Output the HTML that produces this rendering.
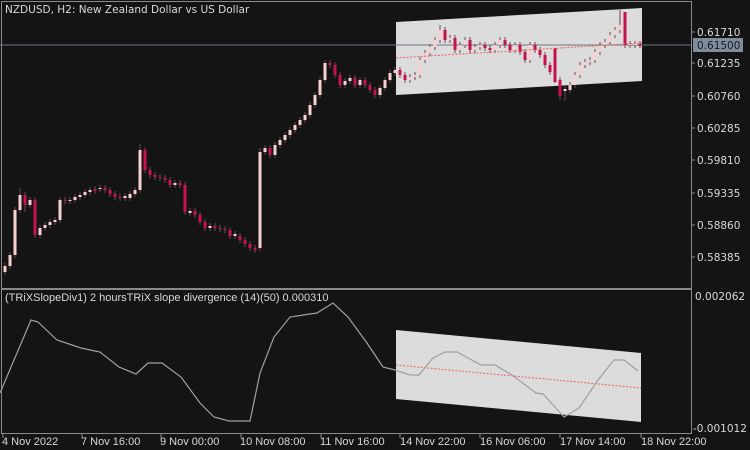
<!DOCTYPE html>
<html><head><meta charset="utf-8"><style>
html,body{margin:0;padding:0;background:#141414;}
svg{display:block;}
text{font-family:"DejaVu Sans","Liberation Sans",sans-serif;font-size:10.5px;fill:#d8d8d8;}
.s{font-family:"Liberation Sans",sans-serif;font-size:11px;}
</style></head><body>
<svg width="750" height="450" xmlns="http://www.w3.org/2000/svg">
<rect width="750" height="450" fill="#141414"/>
<polygon points="396,22 642,8 642,81 396,95" fill="#dcdcdc"/>
<line x1="0" y1="45" x2="691" y2="45" stroke="#6a7680" stroke-width="1"/>
<!-- wicks -->
<path fill="none" stroke="#6a4a55" stroke-width="1" d="
M5,263V275 M10,252V269 M15,207V258 M20,188V213 M25,192V212 M30,197V208 M35,197V238 M40,225V238 M45,222V231 M50,219V228 M55,217V225 M60,197V223 M65,197V204 M70,197V204 M75,194V203 M80,192V200 M85,189V198 M90,187V195 M95,186V194 M100,185V192 M105,185V193 M110,187V197 M115,191V200 M120,194V201 M125,193V201 M130,191V201 M135,187V197 M140,144V193 M145,147V173 M150,167V178 M155,172V180 M160,174V181 M165,175V183 M170,177V188 M175,180V188 M180,180V188 M185,182V215 M190,208V216 M195,208V218 M200,212V225 M205,219V231 M210,223V231 M215,223V231 M220,225V232 M225,226V233 M230,227V239 M235,231V239 M240,233V243 M245,237V247 M250,241V251 M255,245V253 M260,148V251 M265,145V155 M270,145V158 M275,142V158 M280,137V148 M285,132V143 M290,127V138 M295,122V133 M300,117V128 M305,112V123 M310,102V118 M315,92V108 M320,77V98 M325,60V83 M330,60V68 M335,62V78 M340,72V88 M345,78V88 M350,75V84 M355,75V88 M360,77V88 M365,77V88 M370,82V93 M375,87V98 M380,85V98 M385,77V91 M390,70V83 M395,67V76 M400,67V78 M405,72V83 M410,74V83 M415,72V80 M420,57V78 M425,50V63 M430,44V56 M435,37V50 M440,25V43 M445,27V43 M450,35V43 M455,35V53 M460,42V53 M465,37V48 M470,37V53 M475,44V53 M480,42V50 M485,42V51 M490,45V53 M495,42V53 M500,37V48 M505,37V48 M510,42V53 M515,42V53 M520,42V55 M525,49V63 M530,42V63 M535,42V53 M540,47V58 M545,52V68 M550,62V75 M555,69V83 M560,77V100 M565,86V101 M570,82V93 M575,72V88 M580,62V78 M585,59V68 M590,57V65 M595,49V63 M600,42V55 M605,39V48 M610,32V45 M615,27V38 M620,10V33 M625,22V48 M630,41V48 M635,41V48 M640,41V48"/>
<!-- bull bodies -->
<path fill="#f7d0d2" d="
M3.5,266h3v6h-3z M8.5,255h3v11h-3z M13.5,210h3v45h-3z M18.5,195h3v15h-3z M28.5,200h3v5h-3z M38.5,228h3v7h-3z M43.5,225h3v3h-3z M48.5,222h3v3h-3z M53.5,220h3v2h-3z M58.5,200h3v20h-3z M68.5,200h3v1h-3z M73.5,197h3v3h-3z M78.5,195h3v2h-3z M83.5,192h3v3h-3z M88.5,190h3v2h-3z M98.5,188h3v1h-3z M123.5,196h3v2h-3z M128.5,194h3v4h-3z M133.5,190h3v4h-3z M138.5,150h3v40h-3z M173.5,183h3v2h-3z M188.5,211h3v2h-3z M208.5,226h3v2h-3z M233.5,234h3v2h-3z M258.5,152h3v96h-3z M263.5,148h3v4h-3z M273.5,145h3v10h-3z M278.5,140h3v5h-3z M283.5,135h3v5h-3z M288.5,130h3v5h-3z M293.5,125h3v5h-3z M298.5,120h3v5h-3z M303.5,115h3v5h-3z M308.5,105h3v10h-3z M313.5,95h3v10h-3z M318.5,80h3v15h-3z M323.5,63h3v17h-3z M343.5,81h3v4h-3z M348.5,78h3v3h-3z M358.5,80h3v5h-3z M378.5,88h3v7h-3z M383.5,80h3v8h-3z M388.5,73h3v7h-3z M393.5,70h3v3h-3z M408.5,77h3v3h-3z M413.5,75h3v2h-3z M418.5,60h3v15h-3z M423.5,53h3v7h-3z M428.5,47h3v6h-3z M433.5,40h3v7h-3z M438.5,30h3v10h-3z M448.5,38h3v2h-3z M458.5,45h3v5h-3z M463.5,40h3v5h-3z M473.5,47h3v3h-3z M478.5,45h3v2h-3z M493.5,45h3v5h-3z M498.5,40h3v5h-3z M513.5,45h3v5h-3z M528.5,45h3v15h-3z M563.5,89h3v2h-3z M568.5,85h3v5h-3z M573.5,75h3v10h-3z M578.5,65h3v10h-3z M583.5,62h3v3h-3z M588.5,60h3v2h-3z M593.5,52h3v8h-3z M598.5,45h3v7h-3z M603.5,42h3v3h-3z M608.5,35h3v7h-3z M613.5,30h3v5h-3z M618.5,25h3v5h-3z M628.5,44h3v1h-3z M633.5,44h3v1h-3z"/>
<!-- bear bodies -->
<path fill="#c8124f" d="
M23.5,195h3v10h-3z M33.5,200h3v35h-3z M63.5,200h3v1h-3z M93.5,189h3v2h-3z M103.5,188h3v2h-3z M108.5,190h3v4h-3z M113.5,194h3v3h-3z M118.5,197h3v1h-3z M143.5,150h3v20h-3z M148.5,170h3v5h-3z M153.5,175h3v2h-3z M158.5,177h3v1h-3z M163.5,178h3v2h-3z M168.5,180h3v5h-3z M178.5,183h3v2h-3z M183.5,185h3v27h-3z M193.5,211h3v4h-3z M198.5,215h3v7h-3z M203.5,222h3v6h-3z M213.5,226h3v2h-3z M218.5,228h3v1h-3z M223.5,229h3v1h-3z M228.5,230h3v6h-3z M238.5,236h3v4h-3z M243.5,240h3v4h-3z M248.5,244h3v4h-3z M253.5,248h3v2h-3z M268.5,148h3v7h-3z M328.5,63h3v2h-3z M333.5,65h3v10h-3z M338.5,75h3v10h-3z M353.5,78h3v7h-3z M363.5,80h3v5h-3z M368.5,85h3v5h-3z M373.5,90h3v5h-3z M398.5,70h3v5h-3z M403.5,75h3v5h-3z M443.5,30h3v10h-3z M453.5,38h3v12h-3z M468.5,40h3v10h-3z M483.5,45h3v3h-3z M488.5,48h3v2h-3z M503.5,40h3v5h-3z M508.5,45h3v5h-3z M518.5,45h3v7h-3z M523.5,52h3v8h-3z M533.5,45h3v5h-3z M538.5,50h3v5h-3z M543.5,55h3v10h-3z M548.5,65h3v7h-3z M553.5,48h3v34h-3z M558.5,80h3v16h-3z M623.5,12h3v33h-3z M638.5,44h3v2h-3z"/>
<line x1="396" y1="58" x2="642" y2="43" stroke="#f06060" stroke-width="1" stroke-dasharray="2,1.5"/>
<rect x="1.5" y="1.5" width="690" height="287" fill="none" stroke="#8a8a8a" stroke-width="1"/>
<rect x="1.5" y="289.5" width="690" height="144" fill="none" stroke="#8a8a8a" stroke-width="1"/>
<text x="5" y="13">NZDUSD, H2:  New Zealand Dollar vs US Dollar</text>
<g>
<line x1="691" y1="32" x2="695" y2="32" stroke="#8a8a8a"/><text x="697" y="36">0.61710</text>
<rect x="693" y="38" width="50" height="14" fill="#7d8d9d"/><text x="697" y="49" style="fill:#1a1a1a">0.61500</text>
<line x1="691" y1="63" x2="695" y2="63" stroke="#8a8a8a"/><text x="697" y="67">0.61235</text>
<line x1="691" y1="96" x2="695" y2="96" stroke="#8a8a8a"/><text x="697" y="100">0.60760</text>
<line x1="691" y1="128" x2="695" y2="128" stroke="#8a8a8a"/><text x="697" y="132">0.60285</text>
<line x1="691" y1="160" x2="695" y2="160" stroke="#8a8a8a"/><text x="697" y="164">0.59810</text>
<line x1="691" y1="193" x2="695" y2="193" stroke="#8a8a8a"/><text x="697" y="197">0.59335</text>
<line x1="691" y1="225" x2="695" y2="225" stroke="#8a8a8a"/><text x="697" y="229">0.58860</text>
<line x1="691" y1="257" x2="695" y2="257" stroke="#8a8a8a"/><text x="697" y="261">0.58385</text>
<text x="695" y="300">0.002062</text>
<text x="693" y="432">-0.001012</text>
</g>
<polygon points="396,330 641,353 641,422 396,399" fill="#dcdcdc"/>
<line x1="396" y1="365" x2="641" y2="388" stroke="#f06060" stroke-width="1" stroke-dasharray="2,1.5"/>
<polyline fill="none" stroke="#a0a0a0" stroke-width="1.2" points="0,393 31,320 38,322 57,340 81,348 100,352 119,367 136,374 148,363 162,363 181,377 200,403 214,417 229,421 250,421 260,373 274,337 290,317 310,314 317,313 333,303 348,317 367,343 383,367 395,370 410,375 419,375 433,358 445,352 457,352 481,365 495,365 512,375 536,393 543,394 564,417 579,408 598,380 614,360 624,360 638,371"/>
<text class="s" x="5" y="301">(TRiXSlopeDiv1) 2 hoursTRiX slope divergence (14)(50) 0.000310</text>
<g stroke="#8a8a8a">
<line x1="3" y1="434" x2="3" y2="438"/><line x1="82" y1="434" x2="82" y2="438"/><line x1="161" y1="434" x2="161" y2="438"/><line x1="241" y1="434" x2="241" y2="438"/><line x1="321" y1="434" x2="321" y2="438"/><line x1="400" y1="434" x2="400" y2="438"/><line x1="480" y1="434" x2="480" y2="438"/><line x1="560" y1="434" x2="560" y2="438"/><line x1="641" y1="434" x2="641" y2="438"/>
</g>
<text class="s" x="2" y="445">4 Nov 2022</text>
<text class="s" x="81" y="445">7 Nov 16:00</text>
<text class="s" x="160" y="445">9 Nov 00:00</text>
<text class="s" x="240" y="445">10 Nov 08:00</text>
<text class="s" x="320" y="445">11 Nov 16:00</text>
<text class="s" x="400" y="445">14 Nov 22:00</text>
<text class="s" x="480" y="445">16 Nov 06:00</text>
<text class="s" x="560" y="445">17 Nov 14:00</text>
<text class="s" x="641" y="445">18 Nov 22:00</text>
</svg>
</body></html>
